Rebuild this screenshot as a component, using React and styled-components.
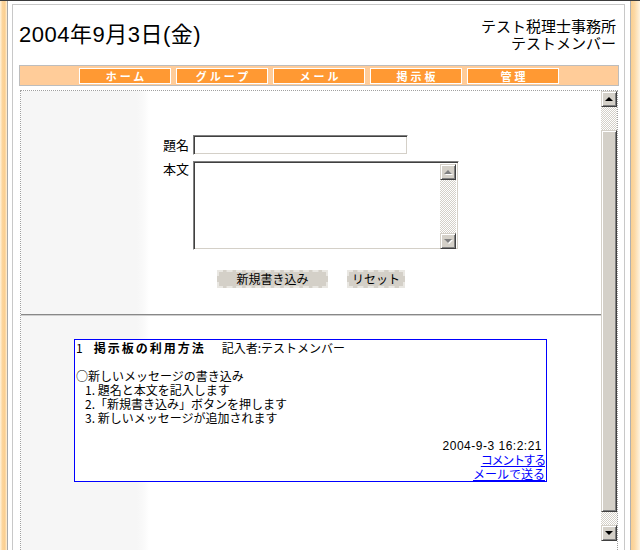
import React from 'react';
import styled, { createGlobalStyle, css } from 'styled-components';

const GlobalStyle = createGlobalStyle`
  html, body {
    margin: 0;
    padding: 0;
    background: #fff;
  }
  body {
    font-family: "Liberation Sans", "Noto Sans CJK JP", sans-serif;
    font-size: 12px;
    color: #000;
    overflow: hidden;
  }
`;

const bevel = css`
  box-sizing: border-box;
  background: #d4d0c8;
  border: 1px solid;
  border-color: #d4d0c8 #404040 #404040 #d4d0c8;
  box-shadow: inset 1px 1px #fff, inset -1px -1px #808080;
`;

const sunken = css`
  box-sizing: border-box;
  border: 1px solid;
  border-color: #808080 #fff #fff #808080;
  box-shadow: inset 1px 1px #404040, inset -1px -1px #d4d0c8;
`;

const Page = styled.div`
  width: 640px;
  height: 550px;
  box-sizing: border-box;
  border-top: 1px solid #3c3c3c;
  display: flex;
  overflow: hidden;
`;

const LeftRail = styled.div`
  flex: none;
  width: 7px;
  background: linear-gradient(to right, #fff3dd 0, #fcd59c 35%, #fbcf90 70%, #fff1da 100%);
  border-right: 1px solid #a9a9a9;
`;

const RightRail = styled.div`
  flex: none;
  width: 9px;
  margin-left: 5px;
  border-left: 1px solid #b0b0b0;
  background: linear-gradient(to right, #fbcf90 0, #fcd9a6 40%, #fff3df 100%);
`;

const Main = styled.div`
  flex: 1;
  min-width: 0;
  margin: 3px 0 0 4px;
  border: 1px solid #c8c8c8;
  border-bottom: none;
  padding: 0 5px 0 6px;
  display: flex;
  flex-direction: column;
`;

const Header = styled.header`
  height: 60px;
  display: flex;
  align-items: center;
  justify-content: space-between;
  padding-right: 3px;
`;

const DateTitle = styled.h1`
  margin: 0;
  font-family: "Liberation Sans", "Noto Sans CJK JP", sans-serif;
  font-size: 22px;
  font-weight: normal;
  letter-spacing: 0.5px;
  line-height: 1;
`;

const Office = styled.div`
  text-align: right;
  font-family: "Noto Sans CJK JP", sans-serif;
  font-size: 15px;
  line-height: 17px;
  padding-bottom: 3px;
`;

const Nav = styled.nav`
  height: 21px;
  box-sizing: border-box;
  border: 1px solid #bdbdbd;
  background: #ffcc99;
  display: flex;
  justify-content: center;
  align-items: flex-start;
  gap: 5px;
  padding-top: 2px;
`;

const NavButton = styled.a`
  width: 92px;
  height: 16px;
  box-sizing: border-box;
  background: #ff9933;
  border: 1px solid #fff;
  color: #fff;
  font-family: "Noto Sans CJK JP", sans-serif;
  font-size: 11px;
  font-weight: bold;
  letter-spacing: 3px;
  padding-left: 3px;
  display: flex;
  align-items: center;
  justify-content: center;
  text-decoration: none;
  line-height: 1;
`;

const Frame = styled.div`
  flex: 1;
  min-height: 0;
  margin: 4px 1px 0;
  border: 1px dotted #a0a0a0;
  border-bottom: none;
  display: flex;
  overflow: hidden;
`;

const Content = styled.div`
  flex: 1;
  min-width: 0;
  display: flex;
  flex-direction: column;
  align-items: center;
  background: linear-gradient(to right, #f6f6f6 0, #f6f6f6 116px, #fafafa 123px, #fff 128px);
`;

const Scrollbar = styled.div`
  flex: none;
  width: 16px;
  height: ${p => p.$height}px;
  display: flex;
  flex-direction: column;
`;

const ScrollButton = styled.div`
  ${bevel};
  flex: none;
  width: 16px;
  height: 16px;
  display: flex;
  align-items: center;
  justify-content: center;
`;

const Arrow = styled.span`
  width: 0;
  height: 0;
  border-left: 4px solid transparent;
  border-right: 4px solid transparent;
  ${p => (p.$down ? 'border-top' : 'border-bottom')}: 4px solid ${p => (p.$disabled ? '#808080' : '#000')};
  ${p => p.$disabled && 'filter: drop-shadow(1px 1px 0 #fff);'}
`;

const Track = styled.div`
  flex: ${p => (p.$size ? 'none' : '1')};
  height: ${p => (p.$size ? `${p.$size}px` : 'auto')};
  background-color: #fff;
  background-image: conic-gradient(#d4d0c8 25%, #fff 0 50%, #d4d0c8 0 75%, #fff 0);
  background-size: 2px 2px;
`;

const Thumb = styled.div`
  ${bevel};
  flex: none;
  height: ${p => p.$size}px;
`;

const PostForm = styled.form`
  margin-top: 44px;
  display: flex;
  flex-direction: column;
  align-items: center;
`;

const Fields = styled.div`
  display: grid;
  grid-template-columns: auto auto;
  column-gap: 4px;
  row-gap: 6px;
  align-items: start;
`;

const FieldLabel = styled.label`
  font-family: "Noto Sans CJK JP", sans-serif;
  font-size: 13px;
  line-height: 14px;
  padding-top: ${p => (p.$center ? 0 : 1)}px;
  align-self: ${p => (p.$center ? 'center' : 'start')};
`;

const TitleInput = styled.input`
  ${sunken};
  width: 215px;
  height: 20px;
  margin: 0;
  padding: 1px 3px;
  background: #fff;
  outline: none;
  font: inherit;
`;

const BodyBox = styled.div`
  ${sunken};
  width: 266px;
  height: 89px;
  padding: 2px;
  display: flex;
  background: #fff;
`;

const BodyArea = styled.textarea`
  flex: 1;
  border: none;
  outline: none;
  resize: none;
  padding: 1px 2px;
  margin: 0;
  font: inherit;
  overflow: hidden;
`;

const ButtonRow = styled.div`
  margin-top: 20px;
  display: flex;
  gap: 19px;
`;

const FormButton = styled.button`
  width: ${p => p.$width}px;
  height: 18px;
  box-sizing: border-box;
  padding: 0;
  background: #d4d0c8;
  border: 2px dashed #e9e7e2;
  font-family: "Noto Sans CJK JP", sans-serif;
  font-size: 12px;
  line-height: 1;
  color: #000;
`;

const Rule = styled.hr`
  align-self: stretch;
  margin: 26px 0 0;
  height: 0;
  border: none;
  border-top: 1px solid #888;
  border-bottom: 1px solid #cfcfcf;
`;

const Entry = styled.div`
  align-self: flex-start;
  margin: 23px 0 0 53px;
  width: 473px;
  box-sizing: border-box;
  border: 1px solid #0000ff;
  padding: 1px 1px 0 1px;
  font-family: "Noto Sans CJK JP", sans-serif;
  font-size: 12px;
  line-height: 14px;
  background: #fff;
`;

const EntryHead = styled.div`
  display: flex;
  white-space: nowrap;
`;

const EntryTitle = styled.b`
  margin: 0 16px 0 11px;
  letter-spacing: 2px;
`;

const Line = styled.div`
  min-height: 14px;
  padding-left: ${p => p.$indent || 0}px;
  white-space: nowrap;
`;

const Meta = styled.div`
  text-align: right;
  padding-right: 3px;
  letter-spacing: 0.5px;
  font-family: "Liberation Sans", "Noto Sans CJK JP", sans-serif;
`;

const MetaLink = styled.a`
  display: block;
  text-align: right;
  color: #0000ff;
  text-decoration: underline;
  letter-spacing: ${p => (p.$tight ? -1.3 : 0)}px;
`;

const navItems = ['ホーム', 'グループ', 'メール', '掲示板', '管理'];

const steps = [
  '1. 題名と本文を記入します',
  '2.「新規書き込み」ボタンを押します',
  '3. 新しいメッセージが追加されます',
];

export default function App() {
  return (
    <>
      <GlobalStyle />
      <Page>
        <LeftRail />
        <Main>
          <Header>
            <DateTitle>2004年9月3日(金)</DateTitle>
            <Office>
              <div>テスト税理士事務所</div>
              <div>テストメンバー</div>
            </Office>
          </Header>
          <Nav>
            {navItems.map(item => (
              <NavButton key={item} href="#">{item}</NavButton>
            ))}
          </Nav>
          <Frame>
            <Content>
              <PostForm onSubmit={e => e.preventDefault()}>
                <Fields>
                  <FieldLabel htmlFor="subject" $center>題名</FieldLabel>
                  <TitleInput id="subject" type="text" />
                  <FieldLabel htmlFor="body">本文</FieldLabel>
                  <BodyBox>
                    <BodyArea id="body" />
                    <Scrollbar $height={85}>
                      <ScrollButton><Arrow $disabled /></ScrollButton>
                      <Track />
                      <ScrollButton><Arrow $down $disabled /></ScrollButton>
                    </Scrollbar>
                  </BodyBox>
                </Fields>
                <ButtonRow>
                  <FormButton type="submit" $width={111}>新規書き込み</FormButton>
                  <FormButton type="reset" $width={58}>リセット</FormButton>
                </ButtonRow>
              </PostForm>
              <Rule />
              <Entry>
                <EntryHead>
                  <span>1</span>
                  <EntryTitle>掲示板の利用方法</EntryTitle>
                  <span>記入者:テストメンバー</span>
                </EntryHead>
                <Line />
                <Line>○新しいメッセージの書き込み</Line>
                {steps.map(step => (
                  <Line key={step} $indent={9}>{step}</Line>
                ))}
                <Line />
                <Meta>2004-9-3 16:2:21</Meta>
                <MetaLink href="#" $tight>コメントする</MetaLink>
                <MetaLink href="#">メールで送る</MetaLink>
              </Entry>
            </Content>
            <Scrollbar $height={450}>
              <ScrollButton><Arrow /></ScrollButton>
              <Track $size={23} />
              <Thumb $size={382} />
              <Track $size={13} />
              <ScrollButton><Arrow $down /></ScrollButton>
            </Scrollbar>
          </Frame>
        </Main>
        <RightRail />
      </Page>
    </>
  );
}
